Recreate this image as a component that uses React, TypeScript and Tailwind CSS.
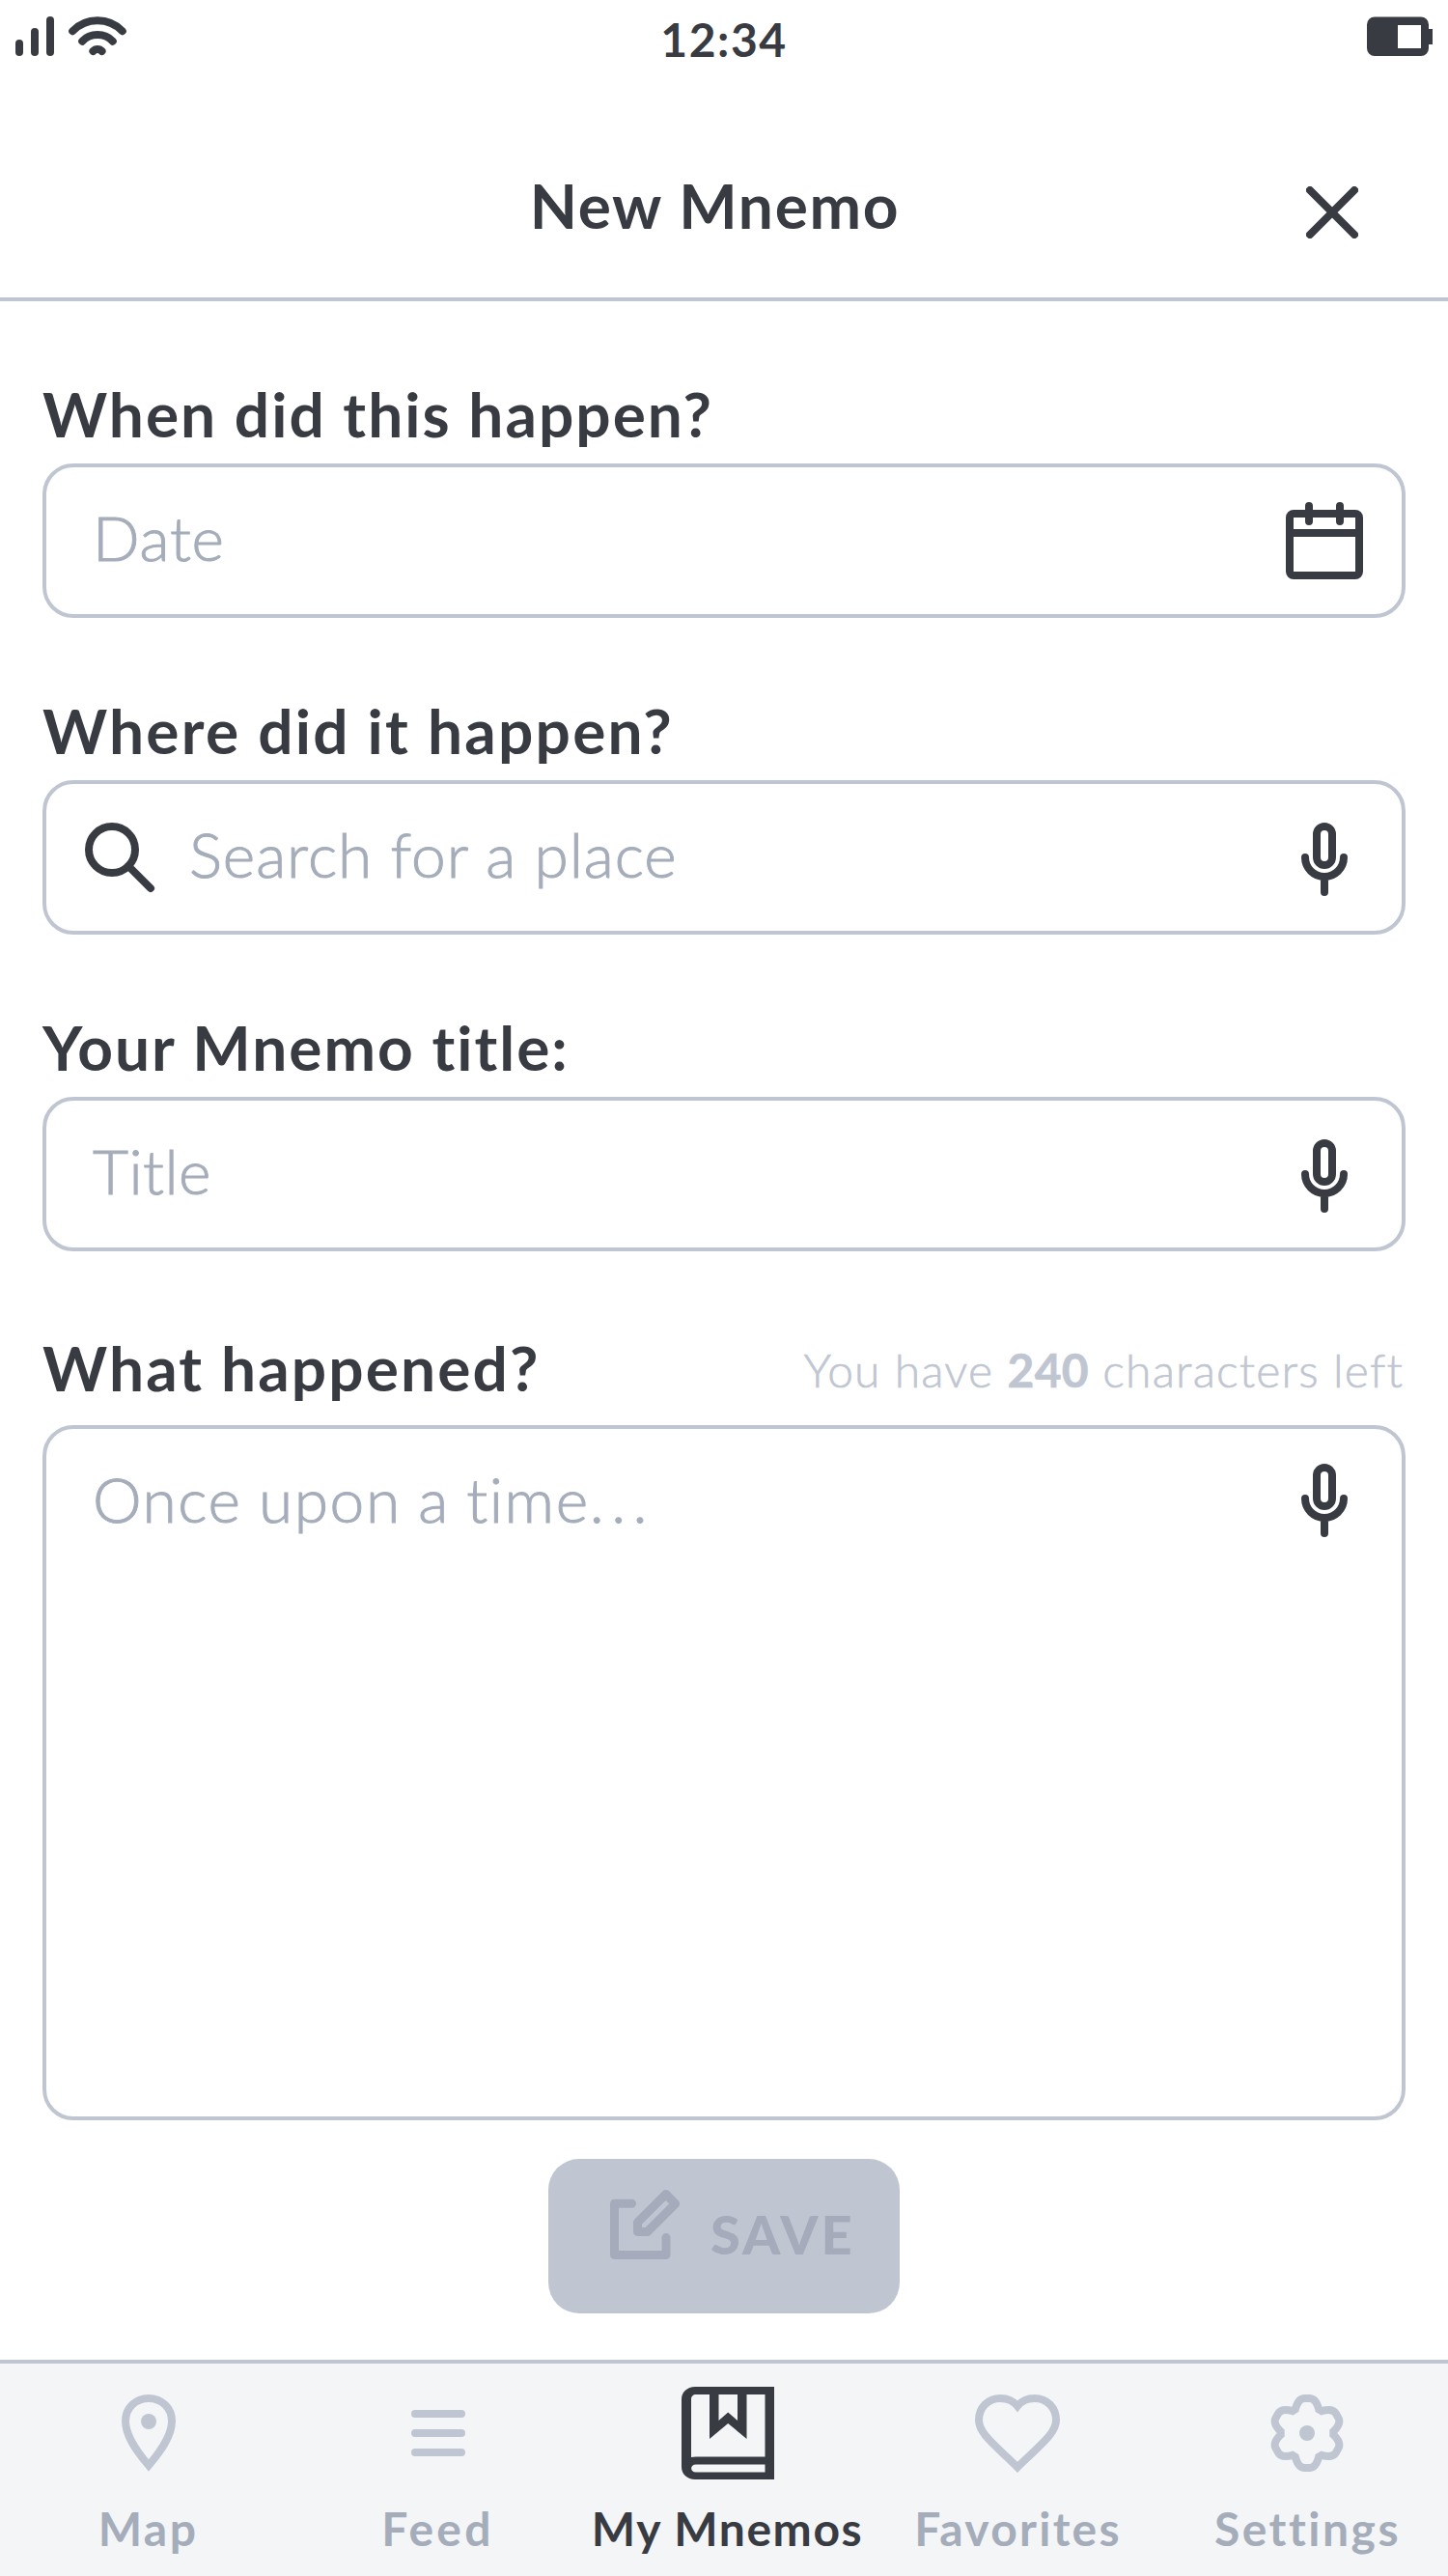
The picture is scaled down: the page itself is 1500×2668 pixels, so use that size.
import type { ReactNode } from 'react';

function Signal() {
  return (
    <svg className="h-[42px] w-10" viewBox="0 0 40 42" fill="#393b42">
      <rect x="0" y="24" width="8" height="17" rx="4" />
      <rect x="16" y="12" width="8" height="29" rx="4" />
      <rect x="32" y="0" width="8" height="41" rx="4" />
    </svg>
  );
}

function Wifi() {
  return (
    <svg className="h-[42px] w-[61px]" viewBox="0 0 61 42" fill="none" stroke="#393b42" strokeWidth="8" strokeLinecap="round">
      <path d="M4.200 15.200C18.500 .7 41.500 .7 55.800 15.200" />
      <path d="M14.200 25.700C22.500 16.900 37.500 16.900 45.800 25.700" />
      <path d="M25.400 36C27.800 33.300 32.200 33.300 34.600 36" />
    </svg>
  );
}

function Battery() {
  return (
    <svg className="h-[42px] w-[68px]" viewBox="0 0 68 42" fill="#393b42">
      <path fillRule="evenodd" d="M8 .5H56A8 8 0 0 1 64 8.500V13H68V29H64V33A8 8 0 0 1 56 41H8A8 8 0 0 1 0 33V8.500A8 8 0 0 1 8 .5ZM32 9V33H56V9Z" />
    </svg>
  );
}

function Close() {
  return (
    <svg className="h-[54px] w-[54px]" viewBox="0 0 54 54" fill="none" stroke="#393b42" strokeWidth="8" strokeLinecap="round">
      <path d="M4 4L50 50M50 4L4 50" />
    </svg>
  );
}

function Calendar() {
  return (
    <svg className="size-20" viewBox="0 0 80 80" fill="none" stroke="#393b42" strokeWidth="8">
      <rect x="4" y="12" width="72" height="64" rx="4" />
      <path d="M4 32H76" />
      <path d="M24 4V20M56 4V20" strokeLinecap="round" />
    </svg>
  );
}

function Mic() {
  return (
    <svg className="size-20" viewBox="0 0 80 80" fill="none" stroke="#393b42" strokeWidth="8" strokeLinecap="round">
      <rect x="32" y="8" width="16" height="40" rx="8" />
      <path d="M20 40A20 20 0 0 0 60 40M40 60V76" />
    </svg>
  );
}

function Search() {
  return (
    <svg className="size-20" viewBox="0 0 80 80" fill="none" stroke="#393b42" strokeWidth="8" strokeLinecap="round">
      <circle cx="32" cy="32" r="24" />
      <path d="M49 49L72 72" />
    </svg>
  );
}

function Edit() {
  return (
    <svg className="size-[72px]" viewBox="0 0 72 72" fill="none" stroke="#a5abba" strokeWidth="9" strokeLinecap="round" strokeLinejoin="round">
      <path d="M22.500 14.250H4.500V67.500H58V49.500" />
      <path d="M57.800 4.500L67.600 14.500L38.600 43.500H28.500V33.800Z" />
    </svg>
  );
}

function Pin() {
  return (
    <svg className="h-20 w-14" viewBox="0 0 56 80" fill="none">
      <path d="M28 73.500C14 57 4 42 4 27.500C4 14 14.500 4 28 4S52 14 52 27.500C52 42 42 57 28 73.500Z" stroke="#c0c6d1" strokeWidth="8" />
      <circle cx="28" cy="28" r="8" fill="#c0c6d1" />
    </svg>
  );
}

function Lines() {
  return (
    <svg className="h-12 w-14" viewBox="0 0 56 48" stroke="#c0c6d1" strokeWidth="8" strokeLinecap="round">
      <path d="M4 4H52M4 24H52M4 44H52" />
    </svg>
  );
}

function Book() {
  return (
    <svg className="size-24" viewBox="0 0 96 96" fill="#393b42">
      <path
        fillRule="evenodd"
        d="M14 0H96V96H14C6 96 0 90.500 0 83V13C0 5.500 6 0 14 0ZM15 8C12 8 10 10 10 13V73Q12 72.500 15 72.500H86.500V8H67.500V54L48.200 38L29 54V8ZM38.500 8V35L48.200 26.500L58 35V8ZM15 80.500C8.500 80.500 8.500 88.500 15 88.500H86.500V80.500Z"
      />
    </svg>
  );
}

function Heart() {
  return (
    <svg className="h-[81px] w-[88px]" viewBox="0 0 88 81" fill="none" stroke="#c0c6d1" strokeWidth="8">
      <path d="M44 12C40 7 33.500 4 26.300 4C13.500 4 4 13.500 4 26.500C4 40 19 51 44 75.300C69 51 84 40 84 26.500C84 13.500 74.500 4 61.700 4C54.500 4 48 7 44 12Z" />
    </svg>
  );
}

function Gear() {
  return (
    <svg className="h-20 w-[76px]" viewBox="0 0 76 80" fill="none">
      <path
        d="M25.800 15.500C28 7 31.500 4 35.500 4H40.500C44.500 4 48 7 50.200 15.500L53.100 17.200C61.550 14.860 65.900 16.390 67.900 19.840L70.400 24.160C72.400 27.630 71.550 32.160 65.300 38.300V41.700C71.550 47.840 72.400 52.370 70.400 55.840L67.900 60.160C65.900 63.610 61.550 65.140 53.100 62.800L50.200 64.500C48 73 44.500 76 40.500 76H35.500C31.500 76 28 73 25.800 64.500L22.900 62.800C14.450 65.140 10.100 63.610 8.100 60.160L5.600 55.840C3.600 52.370 4.450 47.840 10.700 41.700V38.300C4.450 32.160 3.600 27.630 5.600 24.160L8.100 19.840C10.100 16.390 14.450 14.860 22.900 17.200Z"
        stroke="#c0c6d1"
        strokeWidth="8"
      />
      <circle cx="38" cy="40" r="8" fill="#c0c6d1" />
    </svg>
  );
}

function Label({ children, spacing }: { children: ReactNode; spacing: string }) {
  return <label className={`block text-[64px] leading-none font-bold whitespace-nowrap ${spacing}`}>{children}</label>;
}

function Field({ left, icon, text, spacing }: { left?: ReactNode; icon: ReactNode; text: string; spacing: string }) {
  return (
    <div className="mt-[19px] flex h-40 items-center rounded-[32px] border-4 border-[#c0c6d1] pr-10 pl-9">
      {left}
      <span
        className={`flex-1 pb-1.5 text-[64px] leading-none font-light whitespace-nowrap text-[#a5adbb] [-webkit-text-stroke:1px_#a5adbb] ${left ? 'pl-8' : 'pl-3'} ${spacing}`}
      >
        {text}
      </span>
      {icon}
    </div>
  );
}

function Tab({ icon, label, active, spacing }: { icon: ReactNode; label: string; active?: boolean; spacing: string }) {
  return (
    <div className="flex w-[300px] shrink-0 flex-col items-center">
      <div className="flex h-[144px] items-center justify-center">{icon}</div>
      <span className={`mt-[3px] text-[48px] leading-none font-bold whitespace-nowrap ${active ? 'text-[#393b42]' : 'text-[#a5adbb]'} ${spacing}`}>
        {label}
      </span>
    </div>
  );
}

export default function App() {
  return (
    <div className="flex h-[2668px] w-[1500px] flex-col overflow-hidden bg-white font-['Lato',sans-serif] text-[#393b42]">
      <header className="h-[312px] border-b-4 border-[#c0c6d1]">
        <div className="grid h-[179px] grid-cols-[1fr_auto_1fr] items-start pr-4 pl-4">
          <div className="flex gap-[15px] pt-[17px]">
            <Signal />
            <Wifi />
          </div>
          <span className="pt-[17px] text-[48px] leading-none font-bold tracking-[1.53px]">12:34</span>
          <div className="flex justify-end pt-[17px]">
            <Battery />
          </div>
        </div>
        <div className="grid grid-cols-[1fr_auto_1fr] pr-[93px] pl-[74px]">
          <span />
          <h1 className="pt-0.5 text-[64px] leading-none font-bold tracking-[1.71px] whitespace-nowrap">New Mnemo</h1>
          <div className="flex justify-end pt-3.5">
            <Close />
          </div>
        </div>
      </header>

      <main className="flex flex-1 flex-col px-11 pt-[85px]">
        <div>
          <Label spacing="tracking-[2.02px]">When did this happen?</Label>
          <Field icon={<Calendar />} text="Date" spacing="tracking-[0.8px]" />
        </div>
        <div className="mt-[85px]">
          <Label spacing="tracking-[2.24px]">Where did it happen?</Label>
          <Field left={<Search />} icon={<Mic />} text="Search for a place" spacing="tracking-[0.95px]" />
        </div>
        <div className="mt-[85px]">
          <Label spacing="tracking-[2px]">Your Mnemo title:</Label>
          <Field icon={<Mic />} text="Title" spacing="tracking-[0.43px]" />
        </div>
        <div className="mt-[89px]">
          <div className="flex justify-between">
            <Label spacing="tracking-[2.13px]">What happened?</Label>
            <p className="mr-0.5 pt-2.5 text-[48px] leading-none font-light tracking-[1.15px] whitespace-nowrap text-[#c0c6d1] [-webkit-text-stroke:0.6px_#c0c6d1]">
              You have <b className="font-bold tracking-[0.4px]">240</b> characters left
            </p>
          </div>
          <div className="mt-[27px] flex h-[720px] items-start justify-between rounded-[32px] border-4 border-[#c0c6d1] pr-9 pl-12">
            <span className="pt-[41px] text-[64px] leading-none font-light tracking-[1.6px] [word-spacing:-1.500px] whitespace-nowrap text-[#a5adbb] [-webkit-text-stroke:1px_#a5adbb]">
              Once upon a time<span className="tracking-[7.500px]">...</span>
            </span>
            <div className="pt-8 pr-1">
              <Mic />
            </div>
          </div>
        </div>
        <button className="mt-10 flex h-40 w-[364px] items-start self-center rounded-[32px] bg-[#c0c6d1] pt-8 pl-16 text-[#a5abba]">
          <Edit />
          <span className="pt-[18px] pl-8 text-[56px] leading-none font-black tracking-[3.1px]">SAVE</span>
        </button>
      </main>

      <nav className="flex h-56 border-t-4 border-[#c0c6d1] bg-[#f3f5f7] pl-[3.500px]">
        <Tab icon={<Pin />} label="Map" spacing="tracking-[2.45px]" />
        <Tab icon={<Lines />} label="Feed" spacing="tracking-[3.24px]" />
        <Tab icon={<Book />} label="My Mnemos" active spacing="tracking-[1.59px]" />
        <Tab icon={<Heart />} label="Favorites" spacing="tracking-[2.26px] pl-0.5" />
        <Tab icon={<Gear />} label="Settings" spacing="tracking-[2.5px] pl-0.5" />
      </nav>
    </div>
  );
}
